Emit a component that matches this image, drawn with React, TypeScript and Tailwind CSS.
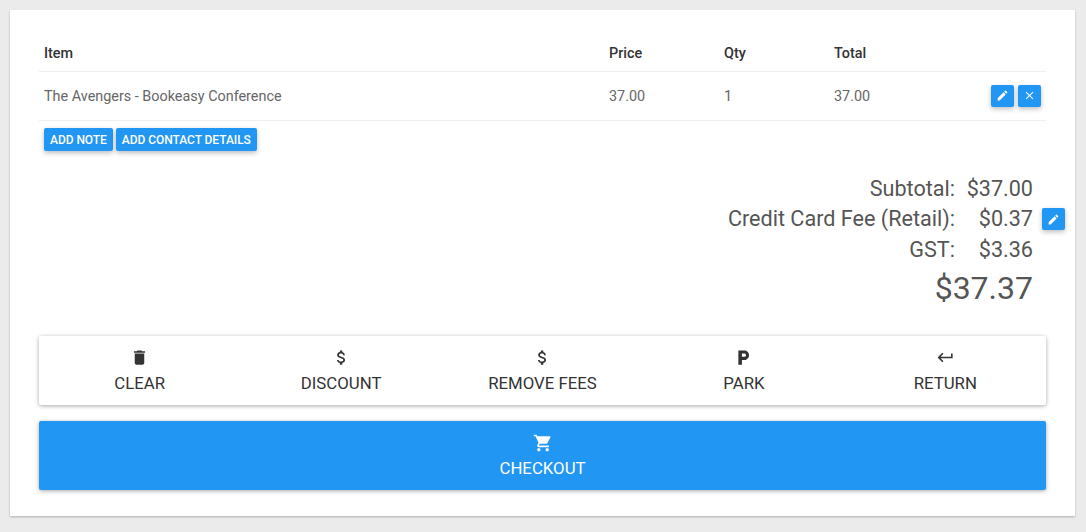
const PATHS = {
  edit: 'M3 17.25V21h3.75L17.81 9.94l-3.75-3.75L3 17.25zM20.71 7.04c.39-.39.39-1.02 0-1.41l-2.34-2.34c-.39-.39-1.02-.39-1.41 0l-1.83 1.83 3.75 3.75 1.83-1.83z',
  close: 'M19 6.41L17.59 5 12 10.59 6.41 5 5 6.41 10.59 12 5 17.59 6.41 19 12 13.41 17.59 19 19 17.59 13.41 12z',
  trash: 'M6 19c0 1.1.9 2 2 2h8c1.1 0 2-.9 2-2V7H6v12zM19 4h-3.5l-1-1h-5l-1 1H5v2h14V4z',
  money: 'M11.8 10.9c-2.27-.59-3-1.2-3-2.15 0-1.09 1.01-1.85 2.7-1.85 1.78 0 2.44.85 2.5 2.1h2.21c-.07-1.72-1.12-3.3-3.21-3.81V3h-3v2.16c-1.94.42-3.5 1.68-3.5 3.61 0 2.31 1.91 3.46 4.7 4.13 2.5.6 3 1.48 3 2.41 0 .69-.49 1.79-2.7 1.79-2.06 0-2.87-.92-2.98-2.1h-2.2c.12 2.19 1.76 3.42 3.68 3.83V21h3v-2.15c1.95-.37 3.5-1.5 3.5-3.55 0-2.84-2.43-3.81-4.7-4.4z',
  parking: 'M13 3H5.5v18H10v-6h3c3.31 0 6-2.69 6-6s-2.69-6-6-6zm.2 8H10V7h3.2c1.1 0 2 .9 2 2s-.9 2-2 2z',
  enter: 'M19 7v4H5.83l3.58-3.59L8 6l-6 6 6 6 1.41-1.41L5.83 13H21V7z',
  cart: 'M7 18c-1.1 0-1.99.9-1.99 2S5.9 22 7 22s2-.9 2-2-.9-2-2-2zM1 2v2h2l3.6 7.59-1.35 2.45c-.16.28-.25.61-.25.96 0 1.1.9 2 2 2h12v-2H7.42c-.14 0-.25-.11-.25-.25l.03-.12.9-1.63h7.45c.75 0 1.41-.41 1.75-1.03l3.58-6.49c.08-.14.12-.31.12-.48 0-.55-.45-1-1-1H5.21l-.94-2H1zm16 16c-1.1 0-1.99.9-1.99 2s.89 2 1.99 2 2-.9 2-2-.9-2-2-2z',
};

function Icon({ d, className }: { d: string; className: string }) {
  return (
    <svg viewBox="0 0 24 24" fill="currentColor" className={className}>
      <path d={d} />
    </svg>
  );
}

function IconButton({ d }: { d: string }) {
  return (
    <button className="w-[23px] h-[22px] flex items-center justify-center rounded-[2px] bg-[#2196f3] text-white shadow-[0_2px_5px_rgba(0,0,0,0.26)]">
      <Icon d={d} className="w-[13px] h-[13px]" />
    </button>
  );
}

function SmallButton({ label }: { label: string }) {
  return (
    <button className="h-[23px] px-[6px] rounded-[2px] bg-[#2196f3] text-white text-[12px] font-medium tracking-[-0.05px] shadow-[0_2px_5px_rgba(0,0,0,0.26)]">
      {label}
    </button>
  );
}

function SummaryRow({ label, value, editable }: { label: string; value: string; editable?: boolean }) {
  return (
    <div className="h-[30.5px] grid grid-cols-[1fr_78px_32px] items-center text-[21.6px] text-[#555]">
      <div className="text-right">{label}</div>
      <div className="text-right">{value}</div>
      <div className="flex justify-end">{editable && <IconButton d={PATHS.edit} />}</div>
    </div>
  );
}

const ACTIONS = [
  { label: 'CLEAR', icon: PATHS.trash },
  { label: 'DISCOUNT', icon: PATHS.money },
  { label: 'REMOVE FEES', icon: PATHS.money },
  { label: 'PARK', icon: PATHS.parking },
  { label: 'RETURN', icon: PATHS.enter },
];

export default function App() {
  return (
    <div className="h-[532px] bg-[#ebebeb] pl-[10px] pt-[10px] font-['Roboto',sans-serif]">
      <div className="w-[1065px] h-[506px] bg-white shadow-[0_1px_2px_rgba(0,0,0,0.25)] px-[29px] pt-[25px]">
        {/* Cart table */}
        <div className="grid grid-cols-[565px_115px_110px_1fr] items-center h-[37px] pl-[5px] pt-px border-b border-[#eeeeee] text-[14.4px] font-medium text-[#333]">
          <div>Item</div>
          <div>Price</div>
          <div>Qty</div>
          <div>Total</div>
        </div>
        <div className="grid grid-cols-[565px_115px_110px_1fr] items-center h-[49px] pl-[5px] border-b border-[#eeeeee] text-[14.4px] text-[#666]">
          <div className="pt-[2px]">The Avengers - Bookeasy Conference</div>
          <div className="pt-[2px]">37.00</div>
          <div className="pt-[2px]">1</div>
          <div className="flex items-center justify-between pr-[5px]">
            <span className="pt-[2px]">37.00</span>
            <div className="flex gap-[4px]">
              <IconButton d={PATHS.edit} />
              <IconButton d={PATHS.close} />
            </div>
          </div>
        </div>
        <div className="flex gap-[3px] mt-[7px] pl-[5px]">
          <SmallButton label="ADD NOTE" />
          <SmallButton label="ADD CONTACT DETAILS" />
        </div>

        {/* Totals */}
        <div className="mt-[21.6px] mr-[-19px]">
          <SummaryRow label="Subtotal:" value="$37.00" />
          <SummaryRow label="Credit Card Fee (Retail):" value="$0.37" editable />
          <SummaryRow label="GST:" value="$3.36" />
          <div className="pr-[32px] text-right text-[32px] leading-[48px] text-[#555]">$37.37</div>
        </div>

        {/* Actions */}
        <div className="mt-[23.9px] h-[69px] grid grid-cols-5 rounded-[2px] bg-white text-[#333] shadow-[0_1px_4px_rgba(0,0,0,0.35)]">
          {ACTIONS.map((action) => (
            <button key={action.label} className="flex flex-col items-center pt-[12px] text-[16.8px]">
              <Icon d={action.icon} className="w-[19px] h-[19px]" />
              <span className="mt-[7px] leading-[19px]">{action.label}</span>
            </button>
          ))}
        </div>
        <button className="mt-[16px] w-full h-[69px] flex flex-col items-center pt-[12px] rounded-[2px] bg-[#2196f3] text-white text-[16.8px] shadow-[0_1px_4px_rgba(0,0,0,0.35)]">
          <Icon d={PATHS.cart} className="w-[20px] h-[20px]" />
          <span className="mt-[6px] leading-[19px]">CHECKOUT</span>
        </button>
      </div>
    </div>
  );
}
